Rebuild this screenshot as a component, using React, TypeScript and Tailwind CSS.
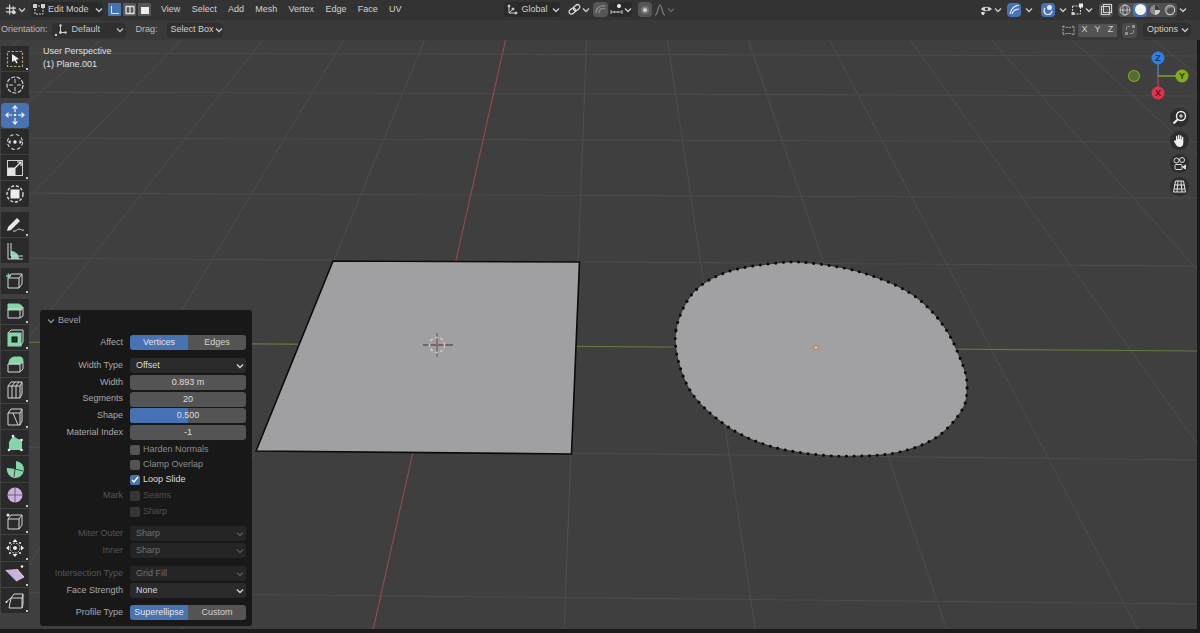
import type { ReactNode } from "react";

const font = "font-['Liberation_Sans','Noto_Sans',sans-serif]";

// floor grid: rays out of the vanishing point, cross lines read off the picture
const vp = { x: 603, y: -393 };
const rays = [-8, -7, -6, -5, -4, -3, -2, -1, 1, 2, 3, 4, 5, 6, 7, 8, 9].map((n) => -0.225 + 0.187 * n);
const crossLines = [
  [0, 53, 1197, 56],
  [0, 92, 1197, 96],
  [0, 138, 1197, 142],
  [0, 193, 1197, 198],
  [0, 258, 1197, 266],
  [0, 447, 1197, 460],
  [0, 592, 1197, 604],
];

const ngon = [
  [676, 330], [693, 293], [727, 272], [777, 263], [810, 263], [860, 272], [910, 293], [943, 325],
  [962, 363], [967, 387], [962, 410], [937, 437], [900, 452], [860, 456], [820, 455], [773, 447],
  [733, 430], [697, 400], [680, 367],
];

function smoothPath(pts: number[][]) {
  const n = pts.length;
  let d = `M${pts[0][0]} ${pts[0][1]}`;
  for (let i = 0; i < n; i++) {
    const p0 = pts[(i - 1 + n) % n];
    const p1 = pts[i];
    const p2 = pts[(i + 1) % n];
    const p3 = pts[(i + 2) % n];
    const c1x = p1[0] + (p2[0] - p0[0]) / 6;
    const c1y = p1[1] + (p2[1] - p0[1]) / 6;
    const c2x = p2[0] - (p3[0] - p1[0]) / 6;
    const c2y = p2[1] - (p3[1] - p1[1]) / 6;
    d += ` C${c1x.toFixed(1)} ${c1y.toFixed(1)} ${c2x.toFixed(1)} ${c2y.toFixed(1)} ${p2[0]} ${p2[1]}`;
  }
  return d + " Z";
}

function Scene() {
  const blob = smoothPath(ngon);
  return (
    <svg className="absolute inset-0" width="1200" height="633" viewBox="0 0 1200 633">
      {crossLines.map((l, i) => (
        <line key={i} x1={l[0]} y1={l[1]} x2={l[2]} y2={l[3]} stroke="#4b4b4b" strokeWidth="1" />
      ))}
      {rays.map((k, i) => (
        <line key={i} x1={vp.x + k * 433} y1="40" x2={vp.x + k * 1023} y2="630" stroke="#4d4d4d" strokeWidth="1" />
      ))}
      <line x1="510" y1="20" x2="373" y2="630" stroke="#8e4a4d" strokeWidth="1.2" />
      <line x1="0" y1="342" x2="1197" y2="351" stroke="#62793c" strokeWidth="1.2" />
      <polygon points="333,261 579.5,262 571.5,454 256,451" fill="#a0a0a2" stroke="#0b0b0b" strokeWidth="1.6" />
      <path d={blob} fill="#a1a1a3" stroke="#2a2a2a" strokeWidth="0.8" />
      <path d={blob} fill="none" stroke="#0c0c0c" strokeWidth="3" strokeDasharray="0.1 7.6" strokeLinecap="round" />
      <circle cx="816" cy="347.5" r="2.2" fill="#c4c4c4" stroke="#c9822f" strokeWidth="1.1" />
      <g fill="none">
        <line x1="423" y1="345" x2="453" y2="345" stroke="#333333" strokeWidth="1" />
        <line x1="437" y1="333" x2="437" y2="357" stroke="#555555" strokeWidth="1" />
        <circle cx="437" cy="345" r="7.5" stroke="#d9c4c4" strokeWidth="1.6" strokeDasharray="3 2.5" />
        <circle cx="437" cy="345" r="1.6" fill="#a5603f" />
      </g>
    </svg>
  );
}

function Chev({ className = "text-[#c8c8c8]" }: { className?: string }) {
  return (
    <svg className={`w-2 h-2 shrink-0 ${className}`} viewBox="0 0 8 8" fill="none" stroke="currentColor" strokeWidth="1.4">
      <path d="M1 2.5 4 5.5 7 2.5" />
    </svg>
  );
}

function ModeBox({ active, kind }: { active?: boolean; kind: "v" | "e" | "f" }) {
  return (
    <div className={`w-[13px] h-[13px] rounded-[1px] flex items-center justify-center ${active ? "bg-[#4772b3]" : "bg-[#565656]"}`}>
      <svg width="10" height="10" viewBox="0 0 10 10">
        {kind === "v" && <path d="M1.500 1v7.500H9" fill="none" stroke="#e8e8e8" strokeWidth="1" />}
        {kind === "e" && <path d="M1 1.500h8v7H1zM5 1.500v7" fill="none" stroke="#e0e0e0" strokeWidth="1.300" />}
        {kind === "f" && <rect x="1" y="2" width="8" height="7" fill="#ececec" />}
      </svg>
    </div>
  );
}

function TopBar() {
  return (
    <div className="flex items-center h-[20px] pb-px bg-[#333333] text-[9px] text-[#cfcfcf] shrink-0">
      <div className="flex items-center ml-[5px] w-[21px] gap-[1px]">
        <svg width="13" height="13" viewBox="0 0 13 13" fill="none" stroke="#d5d5d5" strokeWidth="1.3">
          <path d="M1 5h11M1 9h7M5 1v11M9 3v7" />
          <circle cx="9.500" cy="9.500" r="2.200" fill="#d5d5d5" stroke="none" />
        </svg>
        <Chev />
      </div>
      <div className="flex items-center ml-[5px] w-[72px] h-[15px] bg-[#2a2a2a] rounded-sm pl-[2px] gap-[3px]">
        <svg width="12" height="12" viewBox="0 0 12 12" fill="none" stroke="#cfcfcf" strokeWidth="1">
          <rect x="2" y="2" width="8" height="8" strokeDasharray="2 1" />
          <rect x="0.500" y="0.500" width="3" height="3" fill="#cfcfcf" />
          <rect x="8.500" y="0.500" width="3" height="3" fill="#cfcfcf" />
        </svg>
        <span className="whitespace-nowrap">Edit Mode</span>
        <Chev className="ml-[3px] text-[#c8c8c8]" />
      </div>
      <div className="flex ml-[5px] gap-[2px]">
        <ModeBox active kind="v" />
        <ModeBox kind="e" />
        <ModeBox kind="f" />
      </div>
      <nav className="flex ml-[10px] gap-[11.300px] text-[#d2d2d2]">
        <span>View</span>
        <span>Select</span>
        <span>Add</span>
        <span>Mesh</span>
        <span>Vertex</span>
        <span>Edge</span>
        <span>Face</span>
        <span>UV</span>
      </nav>
      <div className="flex items-center ml-[102px] w-[56px] h-[15px] bg-[#2a2a2a] rounded-sm pl-[3px] gap-[4px]">
        <svg width="11" height="11" viewBox="0 0 11 11" fill="none" stroke="#cfcfcf" strokeWidth="1">
          <path d="M2 1v8h8M2 9l5-5" />
          <circle cx="2" cy="2" r="1" fill="#cfcfcf" />
          <circle cx="9" cy="9" r="1" fill="#cfcfcf" />
          <circle cx="6" cy="5" r="1" fill="#cfcfcf" />
        </svg>
        <span>Global</span>
        <Chev />
      </div>
      <div className="flex items-center ml-[8px] gap-[1px] w-[22px]">
        <svg width="13" height="13" viewBox="0 0 13 13" fill="none" stroke="#dcdcdc" strokeWidth="1.2">
          <rect x="0.800" y="6" width="7" height="4.600" rx="2.300" transform="rotate(-40 4 8)" />
          <rect x="5" y="2.400" width="7" height="4.600" rx="2.300" transform="rotate(-40 8.500 4.700)" />
        </svg>
        <Chev />
      </div>
      <div className="flex items-center ml-[3px] w-[15px] h-[15px] bg-[#555555] rounded-sm justify-center">
        <svg width="11" height="11" viewBox="0 0 11 11" fill="none" stroke="#8a8a8a" strokeWidth="1.4">
          <path d="M1 9a7 7 0 0 1 9-7M4 9a4 4 0 0 1 6-4" />
        </svg>
      </div>
      <div className="flex items-center ml-[1px] w-[23px] gap-[1px] bg-[#2a2a2a] h-[15px] rounded-sm pl-[1px]">
        <svg width="13" height="13" viewBox="0 0 13 13" fill="none" stroke="#bdbdbd" strokeWidth="1">
          <path d="M1 7v4M12 7v4M1 9h11M4.500 8v2M8 8v2" />
          <circle cx="9" cy="3" r="2" fill="#eeeeee" stroke="none" />
        </svg>
        <Chev />
      </div>
      <div className="flex items-center justify-center ml-[6px] w-[14px] h-[15px] bg-[#555555] rounded-sm">
        <div className="w-[4px] h-[4px] rounded-full bg-[#cfcfcf] ring-2 ring-[#777777]" />
      </div>
      <div className="flex items-center ml-[2px] w-[22px] gap-[1px]">
        <svg width="12" height="12" viewBox="0 0 12 12" fill="none" stroke="#7e7e7e" strokeWidth="1.2">
          <path d="M1 11C4 11 4 1 6 1s2 10 5 10" />
        </svg>
        <Chev className="text-[#666666]" />
      </div>
      <div className="flex items-center ml-auto mr-[12px]">
        <div className="flex items-center w-[22px] gap-[1px]">
          <svg width="13" height="12" viewBox="0 0 13 12" fill="#d8d8d8">
            <path d="M1 5c2-3 8-3 11 0-3 3-9 3-11 0z" />
            <circle cx="6.500" cy="5" r="1.600" fill="#333333" />
            <path d="M1 8h4l-1 3H2z" />
          </svg>
          <Chev />
        </div>
        <div className="flex items-center justify-center ml-[5px] w-[14px] h-[14px] bg-[#4772b3] rounded-sm">
          <svg width="11" height="11" viewBox="0 0 11 11" fill="none" stroke="#e0e8f2" strokeWidth="1.2">
            <path d="M1 10C2 5 5 2 10 1M3 10c1-3 3-5 7-5" />
          </svg>
        </div>
        <div className="flex w-[11px] justify-center ml-[2px]"><Chev /></div>
        <div className="flex items-center justify-center ml-[7px] w-[14px] h-[14px] bg-[#4772b3] rounded-sm">
          <svg width="11" height="11" viewBox="0 0 11 11" fill="none">
            <path d="M2 4a4 4 0 1 0 7 3" stroke="#e6e6e6" strokeWidth="1.4" />
            <circle cx="6.500" cy="3.500" r="2.500" fill="#e6e6e6" />
          </svg>
        </div>
        <div className="flex w-[11px] justify-center ml-[2px]"><Chev /></div>
        <div className="flex items-center ml-[3px] w-[22px] gap-[1px]">
          <svg width="13" height="13" viewBox="0 0 13 13" fill="none" stroke="#cfcfcf" strokeWidth="1">
            <rect x="1.500" y="3" width="8" height="8" strokeDasharray="2 1" />
            <rect x="8" y="0.500" width="4" height="4" fill="#eeeeee" stroke="none" />
            <rect x="0.500" y="9" width="3" height="3" fill="#cfcfcf" stroke="none" />
          </svg>
          <Chev />
        </div>
        <div className="flex items-center justify-center ml-[6px] w-[14px] h-[14px] bg-[#505050] rounded-sm">
          <svg width="11" height="11" viewBox="0 0 11 11" fill="none" stroke="#cfcfcf" strokeWidth="1">
            <rect x="0.500" y="2.500" width="8" height="8" />
            <rect x="2.500" y="0.500" width="8" height="8" />
          </svg>
        </div>
        <div className="flex ml-[5px] gap-[1px] bg-[#505050] rounded-sm">
          <Shade kind="wire" />
          <Shade kind="solid" />
          <Shade kind="material" />
          <Shade kind="render" />
        </div>
        <div className="flex w-[11px] justify-center"><Chev /></div>
      </div>
    </div>
  );
}

function Shade({ kind }: { kind: "wire" | "solid" | "material" | "render" }) {
  return (
    <div className={`flex items-center justify-center w-[14px] h-[14px] ${kind === "solid" ? "bg-[#4772b3] rounded-sm" : ""}`}>
      {kind === "wire" && (
        <svg width="12" height="12" viewBox="0 0 12 12" fill="none" stroke="#c8c8c8" strokeWidth="0.9">
          <circle cx="6" cy="6" r="5" />
          <ellipse cx="6" cy="6" rx="2.200" ry="5" />
          <path d="M1 6h10" />
        </svg>
      )}
      {kind === "solid" && <div className="w-[11px] h-[11px] rounded-full bg-[#f2f2f2]" />}
      {kind === "material" && (
        <svg width="12" height="12" viewBox="0 0 12 12">
          <circle cx="6" cy="6" r="5" fill="#8a8a8a" />
          <path d="M6 1a5 5 0 0 1 0 10z" fill="#d0d0d0" />
          <path d="M6 1a5 5 0 0 1 5 5H6z" fill="#3c3c3c" />
        </svg>
      )}
      {kind === "render" && (
        <svg width="12" height="12" viewBox="0 0 12 12" fill="none" stroke="#c8c8c8" strokeWidth="1.2">
          <circle cx="6" cy="6" r="4.600" />
          <path d="M3 9a4 4 0 0 1 5-6" stroke="#8a8a8a" strokeWidth="2" />
        </svg>
      )}
    </div>
  );
}

function SettingsBar() {
  return (
    <div className="flex items-center h-[20px] bg-[#393939] text-[9px] text-[#b9b9b9] shrink-0">
      <span className="ml-px">Orientation:</span>
      <div className="flex items-center ml-[4px] w-[74px] h-[15px] bg-[#303030] rounded-sm pl-[2px]">
        <svg width="13" height="13" viewBox="0 0 13 13" fill="#d0d0d0">
          <path d="M6 1h1v7H6zM6 8h6v1H6z" />
          <circle cx="6.500" cy="1.500" r="1.200" />
          <circle cx="2" cy="11" r="1.200" />
          <circle cx="6.500" cy="8.500" r="1.400" />
          <circle cx="11.500" cy="8.500" r="1.200" />
        </svg>
        <span className="ml-[5px] text-[#c9c9c9]">Default</span>
        <Chev className="ml-auto mr-[2px]" />
      </div>
      <span className="ml-[10px]">Drag:</span>
      <div className="flex items-center ml-[9px] w-[56px] h-[15px] bg-[#303030] rounded-sm pl-[4px] gap-[1px]">
        <span className="text-[#d0d0d0] whitespace-nowrap">Select Box</span>
        <Chev />
      </div>
      <div className="flex items-center ml-auto mr-[9px]">
        <div className="flex items-center justify-center w-[20px] h-[15px]">
          <svg width="13" height="13" viewBox="0 0 13 13" fill="none" stroke="#b5b5b5" strokeWidth="1" strokeDasharray="2 1">
            <path d="M1 2c3 2 8 2 11 0v9c-3-2-8-2-11 0z" />
          </svg>
        </div>
        {["X", "Y", "Z"].map((a) => (
          <div key={a} className="flex items-center justify-center w-[13px] h-[13px] bg-[#535353] text-[#cfcfcf] text-[9px]">
            {a}
          </div>
        ))}
        <div className="flex items-center justify-center ml-[5px] w-[15px] h-[15px] bg-[#4b4b4b] rounded-sm">
          <svg width="12" height="12" viewBox="0 0 12 12" fill="#8f8f8f">
            <rect x="1" y="8" width="3" height="3" />
            <rect x="8" y="1" width="3" height="3" />
            <path d="M3 2h3v1H3zM2 3h1v3H2zM9 6h1v3H9zM6 9h3v1H6z" />
          </svg>
        </div>
        <div className="flex items-center ml-[6px] w-[48px] h-[14px] bg-[#303030] rounded-sm pl-[4px] text-[#cfcfcf] gap-[3px]">
          <span>Options</span>
          <Chev />
        </div>
      </div>
    </div>
  );
}

type ToolProps = { active?: boolean; corner?: boolean; gap?: boolean; children: ReactNode };

function Tool({ active, corner, gap, children }: ToolProps) {
  return (
    <div className={`relative flex items-center justify-center w-[28px] h-[25.300px] mb-px ${gap ? "mt-[4px]" : ""} ${active ? "bg-[#4772b3] rounded-sm" : "bg-[#2a2a2a]"}`}>
      {children}
      {corner && <span className="absolute right-px bottom-px w-[2px] h-[2px] bg-[#c8c8c8]" />}
    </div>
  );
}

const mint = "#86d4aa";
const lilac = "#c9b3dd";
const line = "#d6d6d6";

function Box({ children }: { children?: ReactNode }) {
  return (
    <svg width="20" height="20" viewBox="0 0 20 20" fill="none" stroke={line} strokeWidth="1">
      <path d="M3 7h11v10H3zM3 7l3-4h11l-3 4M17 3v10l-3 4" />
      {children}
    </svg>
  );
}

function Toolbar() {
  return (
    <aside className="absolute left-px top-[46px] w-[28px] flex flex-col">
      <Tool corner>
        <svg width="20" height="20" viewBox="0 0 20 20">
          <rect x="2.500" y="2.500" width="15" height="15" fill="none" stroke="#b0a077" strokeWidth="1.200" strokeDasharray="2.500 1.500" />
          <path d="M7 5l7 5-3 .8 1.600 3-1.400.7-1.500-3L7 13z" fill="#eeeeee" />
        </svg>
      </Tool>
      <Tool>
        <svg width="20" height="20" viewBox="0 0 20 20" fill="none">
          <circle cx="10" cy="10" r="8" stroke="#ddcfc8" strokeWidth="1.200" strokeDasharray="4 1.600" />
          <path d="M10 4v4M10 12v4M4 10h4M12 10h4" stroke="#cccccc" strokeWidth="1" />
        </svg>
      </Tool>
      <Tool active gap>
        <svg width="22" height="22" viewBox="0 0 22 22" fill="#f0f4fa">
          <path d="M11 1l3 3.500H8zM11 21l-3-3.500h6zM1 11l3.500-3v6zM21 11l-3.500 3V8z" />
          <path d="M10.400 5h1.200v3h-1.200zM10.400 14h1.200v3h-1.200zM5 10.400h3v1.200H5zM14 10.400h3v1.200h-3z" />
          <circle cx="11" cy="11" r="1.300" />
        </svg>
      </Tool>
      <Tool>
        <svg width="20" height="20" viewBox="0 0 20 20" fill="none">
          <circle cx="10" cy="10" r="7.500" stroke="#d8d8d8" strokeWidth="1.100" strokeDasharray="3.500 2.500" />
          <circle cx="10" cy="10" r="1.700" fill="#eeeeee" />
          <path d="M3 10l2.500-2v4zM17 10l-2.500 2V8z" fill="#eeeeee" />
        </svg>
      </Tool>
      <Tool corner>
        <svg width="18" height="18" viewBox="0 0 18 18" fill="none">
          <rect x="1.500" y="1.500" width="15" height="15" stroke="#d0d0d0" strokeWidth="1" />
          <rect x="1.500" y="8.500" width="8" height="8" fill="#e4e4e4" />
          <path d="M9 9l6-6M11 3h4v4" stroke="#ededed" strokeWidth="1.200" />
        </svg>
      </Tool>
      <Tool>
        <svg width="20" height="20" viewBox="0 0 20 20" fill="none">
          <circle cx="10" cy="10" r="8" stroke="#d8d8d8" strokeWidth="1.400" strokeDasharray="3 1.800" />
          <rect x="5.500" y="5.500" width="9" height="9" fill="#ededed" />
        </svg>
      </Tool>
      <Tool corner gap>
        <svg width="20" height="20" viewBox="0 0 20 20" fill="none">
          <path d="M3 13l9-9 3 3-9 9-4 1z" fill="#e8e8e8" />
          <path d="M8 17c3 1 4-2 6-2s3 2 5 1" stroke="#d8d8d8" strokeWidth="1" />
        </svg>
      </Tool>
      <Tool>
        <svg width="20" height="20" viewBox="0 0 20 20" fill="none">
          <path d="M6 10a8 8 0 0 1 8 8H6z" fill={mint} />
          <path d="M3 2v16h15M6 2v13h12" stroke={line} strokeWidth="1" />
        </svg>
      </Tool>
      <Tool corner gap>
        <Box>
          <path d="M1 5h5M3.500 2.500v5" stroke={mint} strokeWidth="1.600" />
        </Box>
      </Tool>
      <Tool corner gap>
        <svg width="20" height="20" viewBox="0 0 20 20" fill="none" stroke={line} strokeWidth="1">
          <path d="M3 3h11l3 2v4H3z" fill={mint} stroke={mint} />
          <path d="M3 8h12v9H3zM15 8l3-2v9l-3 2" />
        </svg>
      </Tool>
      <Tool corner>
        <svg width="20" height="20" viewBox="0 0 20 20" fill="none" stroke={line} strokeWidth="1">
          <rect x="3" y="5" width="13" height="13" fill={mint} stroke={mint} />
          <rect x="7" y="9" width="5" height="5" fill="#1d3b2a" stroke="#111111" />
          <path d="M3 5l3-3h12v12l-2 3" />
        </svg>
      </Tool>
      <Tool>
        <svg width="20" height="20" viewBox="0 0 20 20" fill="none" stroke={line} strokeWidth="1">
          <path d="M4 9c0-4 3-6 6-6h6c2 1 2 3 2 5l-3 2H4z" fill={mint} stroke={mint} />
          <path d="M3 10h12v8H3zM15 10l3-2v7l-3 3" />
        </svg>
      </Tool>
      <Tool corner>
        <svg width="20" height="20" viewBox="0 0 20 20" fill="none" stroke={line} strokeWidth="1">
          <path d="M3 6h12v12H3zM3 6l3-4h11l-2 4M17 2v12l-2 4M7 6v12M11 6v12M7 6l3-4M11 6l3-4" />
        </svg>
      </Tool>
      <Tool corner>
        <svg width="20" height="20" viewBox="0 0 20 20" fill="none" stroke={line} strokeWidth="1">
          <path d="M3 6h12v12H3zM3 6l3-4h11l-2 4M17 2v12l-2 4M8 6l5 12" />
        </svg>
      </Tool>
      <Tool>
        <svg width="20" height="20" viewBox="0 0 20 20">
          <path d="M8 3l5 3 4 1v10H4V9z" fill={mint} />
          <circle cx="8" cy="3" r="1.300" fill="#eeeeee" />
          <circle cx="16.500" cy="7" r="1.300" fill="#eeeeee" />
          <circle cx="16.500" cy="17" r="1.300" fill="#eeeeee" />
          <circle cx="4" cy="17" r="1.300" fill="#eeeeee" />
        </svg>
      </Tool>
      <Tool>
        <svg width="20" height="20" viewBox="0 0 20 20" fill="none">
          <path d="M11 2a8.500 8.500 0 1 1-9 7l9 1z" fill={mint} />
          <path d="M13 3l5 3-6 3z" fill={mint} />
          <path d="M10 10L5 4M10 10l-1 8M10 10l8 2" stroke="#2a2a2a" strokeWidth="0.800" />
        </svg>
      </Tool>
      <Tool corner>
        <svg width="20" height="20" viewBox="0 0 20 20" fill="none">
          <circle cx="10" cy="10" r="7.500" fill={lilac} />
          <path d="M2.500 10h15M10 2.500v15" stroke="#5a4a6a" strokeWidth="0.800" />
        </svg>
      </Tool>
      <Tool corner>
        <Box>
          <circle cx="3" cy="3" r="1.500" fill="#eeeeee" stroke="none" />
        </Box>
      </Tool>
      <Tool corner>
        <svg width="20" height="20" viewBox="0 0 20 20" fill="#eeeeee">
          <circle cx="10" cy="10" r="5" fill="none" stroke="#cccccc" strokeDasharray="2 1" />
          <path d="M10 1l2.500 3h-5zM10 19l-2.500-3h5zM1 10l3-2.500v5zM19 10l-3 2.500v-5z" />
          <circle cx="10" cy="10" r="2" />
          <circle cx="5" cy="5" r="1" />
          <circle cx="15" cy="5" r="1" />
          <circle cx="5" cy="15" r="1" />
          <circle cx="15" cy="15" r="1" />
        </svg>
      </Tool>
      <Tool corner>
        <svg width="22" height="20" viewBox="0 0 22 20">
          <path d="M1 6l12-1 7 8-8 4z" fill={lilac} />
          <path d="M13 5l7 8-8 4" fill="none" stroke="#eeeeee" strokeWidth="0.800" />
          <circle cx="18" cy="2.500" r="1.300" fill="#eeeeee" />
        </svg>
      </Tool>
      <Tool corner>
        <svg width="20" height="20" viewBox="0 0 20 20" fill="none" stroke={line} strokeWidth="1">
          <path d="M6 7h11v10H4zM6 7l3-4h9l-1 4M18 3v10l-1 4M1 11l5-4" />
          <circle cx="1.500" cy="11" r="1" fill="#eeeeee" stroke="none" />
        </svg>
      </Tool>
    </aside>
  );
}

function Label({ children, dim }: { children?: ReactNode; dim?: boolean }) {
  return (
    <span className={`w-[76px] text-right shrink-0 whitespace-nowrap ${dim ? "text-[#555555]" : "text-[#a8a8a8]"}`}>{children}</span>
  );
}

function Seg({ on, off }: { on: string; off: string }) {
  return (
    <div className="flex flex-1 h-[15px] rounded-[3px] overflow-hidden text-center leading-[15px]">
      <div className="w-[58px] bg-[#4772b3] text-[#e6e6e6]">{on}</div>
      <div className="flex-1 bg-[#545454] text-[#d2d2d2]">{off}</div>
    </div>
  );
}

function Num({ value, fillBlue }: { value: string; fillBlue?: boolean }) {
  return (
    <div className="relative flex flex-1 h-[15px] rounded-[3px] overflow-hidden bg-[#545454]">
      {fillBlue && <div className="w-[58px] bg-[#4772b3]" />}
      <span className="absolute inset-0 text-center leading-[15px] text-[#dedede]">{value}</span>
    </div>
  );
}

function Select({ value, dim }: { value: string; dim?: boolean }) {
  return (
    <div className={`flex flex-1 items-center h-[15px] rounded-[3px] pl-[6px] pr-[2px] ${dim ? "bg-[#252525] text-[#707070]" : "bg-[#2a2a2a] text-[#d8d8d8]"}`}>
      <span>{value}</span>
      <Chev className={dim ? "ml-auto text-[#555555]" : "ml-auto text-[#d0d0d0]"} />
    </div>
  );
}

function Check({ label, checked, dim }: { label: string; checked?: boolean; dim?: boolean }) {
  return (
    <div className="flex items-center h-[15px] gap-[3px]">
      <div className={`flex items-center justify-center w-[10px] h-[10px] rounded-[2px] ${checked ? "bg-[#4772b3]" : dim ? "bg-[#363636]" : "bg-[#545454]"}`}>
        {checked && (
          <svg width="8" height="8" viewBox="0 0 8 8" fill="none" stroke="#ffffff" strokeWidth="1.400">
            <path d="M1 4l2 2 4-5" />
          </svg>
        )}
      </div>
      <span className={checked ? "text-[#dcdcdc]" : dim ? "text-[#505050]" : "text-[#8c8c8c]"}>{label}</span>
    </div>
  );
}

function Row({ label, dim, className = "", children }: { label?: string; dim?: boolean; className?: string; children: ReactNode }) {
  return (
    <div className={`flex items-center gap-[7px] ${className}`}>
      <Label dim={dim}>{label}</Label>
      <div className="flex flex-1 min-w-0">{children}</div>
    </div>
  );
}

function BevelPanel() {
  return (
    <section className="absolute left-[40px] top-[310px] w-[212px] h-[316px] bg-[#181818] rounded-[3px] text-[9px] pl-[7px] pr-[6px]">
      <div className="flex items-center h-[21px] gap-[3px] text-[#a0a0a0]">
        <Chev className="text-[#8a8a8a]" />
        <span>Bevel</span>
      </div>
      <Row label="Affect" className="mt-[4px]">
        <Seg on="Vertices" off="Edges" />
      </Row>
      <div className="flex flex-col gap-[1.750px] mt-[8px]">
        <Row label="Width Type"><Select value="Offset" /></Row>
        <Row label="Width"><Num value="0.893 m" /></Row>
        <Row label="Segments"><Num value="20" /></Row>
        <Row label="Shape"><Num value="0.500" fillBlue /></Row>
        <Row label="Material Index"><Num value="-1" /></Row>
      </div>
      <Row className="mt-[2px]"><Check label="Harden Normals" /></Row>
      <Row><Check label="Clamp Overlap" /></Row>
      <Row><Check label="Loop Slide" checked /></Row>
      <Row label="Mark" dim className="mt-px"><Check label="Seams" dim /></Row>
      <Row dim className="mt-px"><Check label="Sharp" dim /></Row>
      <div className="flex flex-col gap-[2px] mt-[7px]">
        <Row label="Miter Outer" dim><Select value="Sharp" dim /></Row>
        <Row label="Inner" dim><Select value="Sharp" dim /></Row>
      </div>
      <div className="flex flex-col gap-[2px] mt-[8px]">
        <Row label="Intersection Type" dim><Select value="Grid Fill" dim /></Row>
        <Row label="Face Strength"><Select value="None" /></Row>
      </div>
      <Row label="Profile Type" className="mt-[7px]">
        <Seg on="Superellipse" off="Custom" />
      </Row>
    </section>
  );
}

function Gizmo() {
  return (
    <svg className="absolute left-[1122px] top-[48px]" width="72" height="56" viewBox="0 0 72 56">
      <line x1="36" y1="28" x2="36" y2="10" stroke="#3d7fcf" strokeWidth="1.500" />
      <line x1="36" y1="28" x2="36" y2="45" stroke="#b8394e" strokeWidth="1.500" />
      <line x1="36" y1="28" x2="60" y2="28" stroke="#7fa52a" strokeWidth="1.500" />
      <circle cx="12" cy="28" r="5.500" fill="#566b2e" stroke="#7fa52a" strokeWidth="1.200" />
      <circle cx="36" cy="10" r="6.500" fill="#2f80e0" />
      <circle cx="60" cy="28" r="6.500" fill="#80ad1f" />
      <circle cx="36" cy="45" r="6.500" fill="#e0324f" />
      <text x="36" y="13" textAnchor="middle" fontSize="9" fontWeight="700" fill="#16345c" fontFamily="Liberation Sans">Z</text>
      <text x="60" y="31" textAnchor="middle" fontSize="9" fontWeight="700" fill="#2e4108" fontFamily="Liberation Sans">Y</text>
      <text x="36" y="48" textAnchor="middle" fontSize="9" fontWeight="700" fill="#5b0f1c" fontFamily="Liberation Sans">X</text>
    </svg>
  );
}

function NavButton({ children }: { children: ReactNode }) {
  return (
    <div className="flex items-center justify-center w-[19px] h-[19px] rounded-full bg-[#2d2d2d]">{children}</div>
  );
}

function NavButtons() {
  return (
    <div className="absolute left-[1170px] top-[108px] flex flex-col gap-[4px]">
      <NavButton>
        <svg width="15" height="15" viewBox="0 0 15 15" fill="none" stroke="#eeeeee">
          <circle cx="9" cy="6" r="4.500" strokeWidth="1.400" />
          <path d="M5.500 9.500L1.500 13.500" strokeWidth="2.200" />
          <path d="M7 6h4M9 4v4" strokeWidth="1" />
        </svg>
      </NavButton>
      <NavButton>
        <svg width="15" height="15" viewBox="0 0 15 15" fill="#eeeeee">
          <path d="M4 7V3.500a.7.700 0 0 1 1.400 0V6h.6V2.500a.7.700 0 0 1 1.400 0V6H8V3a.7.700 0 0 1 1.400 0v3.500h.5V4.500a.7.700 0 0 1 1.400 0V10c0 2.500-1.500 4-3.800 4-2 0-3-1-4-3L2 8.500c-.4-.8.600-1.500 1.200-.8z" />
        </svg>
      </NavButton>
      <NavButton>
        <svg width="15" height="15" viewBox="0 0 15 15" fill="none" stroke="#dddddd" strokeWidth="1">
          <circle cx="4.500" cy="4.500" r="2.500" />
          <circle cx="10" cy="4" r="2.500" />
          <rect x="3" y="8.500" width="7" height="5" rx="1" />
          <path d="M10.500 11l3-2v4z" fill="#dddddd" />
        </svg>
      </NavButton>
      <NavButton>
        <svg width="15" height="15" viewBox="0 0 15 15" fill="none" stroke="#e6e6e6" strokeWidth="1">
          <path d="M3.500 2h8l2 11h-12zM2.700 6h9.600M2 10h11M6 2l-1 11M9 2l1 11" />
        </svg>
      </NavButton>
    </div>
  );
}

export default function App() {
  return (
    <div className={`relative w-[1200px] h-[633px] overflow-hidden bg-[#3f3f3f] ${font}`}>
      <Scene />
      <div className="relative flex flex-col">
        <TopBar />
        <SettingsBar />
      </div>
      <div className="absolute left-[43px] top-[45px] text-[9px] leading-[13px] text-[#e2e2e2]">
        <div>User Perspective</div>
        <div>(1) Plane.001</div>
      </div>
      <Toolbar />
      <BevelPanel />
      <Gizmo />
      <NavButtons />
      <div className="absolute right-0 top-[40px] bottom-0 w-[3px] bg-[#1a1a1a]" />
      <div className="absolute left-0 right-0 bottom-0 h-[4px] bg-[#1a1a1a]" />
    </div>
  );
}
